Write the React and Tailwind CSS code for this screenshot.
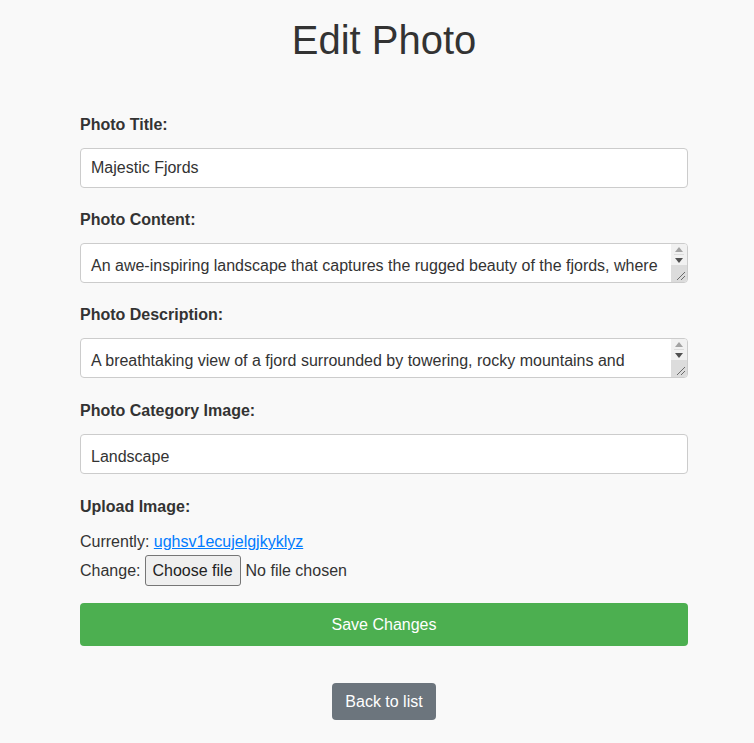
import { useState } from 'react';

const CONTENT =
  'An awe-inspiring landscape that captures the rugged beauty of the fjords, where steep cliffs plunge into deep blue waters and mist drifts over the peaks.';
const DESCRIPTION =
  'A breathtaking view of a fjord surrounded by towering, rocky mountains and verdant green valleys, with calm water reflecting the sky above.';

function Label({ children }) {
  return <label className="block text-[16px] leading-[18px] font-bold text-[#333] mb-[14px]">{children}</label>;
}

// classic scrollbar + resizer drawn over the textarea
function FakeScrollbar() {
  return (
    <div className="absolute top-[1px] right-[1px] bottom-[1px] w-[16px] flex flex-col rounded-r-[3px] overflow-hidden pointer-events-none">
      <div className="h-[10px] bg-[#f1f1f1] flex items-center justify-center">
        <svg width="8" height="5" viewBox="0 0 8 5">
          <path d="M0 5 L4 0 L8 5 Z" fill="#a3a3a3" />
        </svg>
      </div>
      <div className="h-[1px] bg-[#f1f1f1] flex justify-center">
        <div className="w-[10px] bg-[#dcdcdc]" />
      </div>
      <div className="h-[10px] bg-[#f1f1f1] flex items-center justify-center">
        <svg width="8" height="5" viewBox="0 0 8 5">
          <path d="M0 0 L4 5 L8 0 Z" fill="#505050" />
        </svg>
      </div>
      <div className="flex-1 bg-[#dcdcdc] relative">
        <svg className="absolute right-[1px] bottom-[1px]" width="11" height="11" viewBox="0 0 11 11">
          <path d="M10 2 L2 10 M10 6 L6 10" stroke="#6b6b6b" strokeWidth="1" />
        </svg>
      </div>
    </div>
  );
}

export default function App() {
  const [title, setTitle] = useState('Majestic Fjords');
  const [content, setContent] = useState(CONTENT);
  const [description, setDescription] = useState(DESCRIPTION);
  const [category, setCategory] = useState('Landscape');

  const field =
    'block w-full h-[40px] border border-[#ccc] rounded-[4px] bg-white px-[10px] text-[16px] text-[#333] outline-none';

  return (
    <div className="min-h-screen bg-[#f9f9f9] text-[#333]" style={{ fontFamily: '"Liberation Sans", Arial, sans-serif' }}>
      <div className="w-[608px] ml-[80px] pb-[20px]">
        <h1 className="text-center text-[40px] leading-[46px] font-normal text-[#333] pt-[17px] -mx-[80px]">Edit Photo</h1>

        <form className="mt-[53px]" onSubmit={(e) => e.preventDefault()}>
          <Label>Photo Title:</Label>
          <input className={`${field} mb-[23px]`} value={title} onChange={(e) => setTitle(e.target.value)} />

          <Label>Photo Content:</Label>
          <div className="relative mb-[23px]">
            <textarea
              rows={1}
              className={`${field} py-[10px] pr-[28px] leading-[24px] resize-none overflow-hidden`}
              value={content}
              onChange={(e) => setContent(e.target.value)}
            />
            <FakeScrollbar />
          </div>

          <Label>Photo Description:</Label>
          <div className="relative mb-[24px]">
            <textarea
              rows={1}
              className={`${field} py-[10px] pr-[28px] leading-[24px] resize-none overflow-hidden`}
              value={description}
              onChange={(e) => setDescription(e.target.value)}
            />
            <FakeScrollbar />
          </div>

          <Label>Photo Category Image:</Label>
          <textarea
            rows={1}
            className={`${field} py-[10px] leading-[24px] resize-none overflow-hidden mb-[24px]`}
            value={category}
            onChange={(e) => setCategory(e.target.value)}
          />

          <Label>Upload Image:</Label>
          <div className="mt-[17px] text-[16px] leading-[18px]">
            Currently:{' '}
            <a href="#" className="text-[#007bff] underline">
              ughsv1ecujelgjkyklyz
            </a>
          </div>
          <div className="mt-[4px] flex items-center text-[16px] leading-[18px]">
            <span className="mr-[4px]">Change:</span>
            <button
              type="button"
              className="h-[31px] px-[7px] border border-[#767676] rounded-[3px] bg-[#efefef] text-[#222] text-[16px]"
            >
              Choose file
            </button>
            <span className="ml-[5px]">No file chosen</span>
          </div>

          <button
            type="submit"
            className="mt-[17px] block w-full h-[43px] rounded-[4px] bg-[#4caf50] text-white text-[16px]"
          >
            Save Changes
          </button>
        </form>

        <div className="mt-[37px] flex justify-center">
          <a href="#" className="h-[37px] px-[13px] flex items-center rounded-[4px] bg-[#6c757d] text-white text-[16px]">
            Back to list
          </a>
        </div>
      </div>
    </div>
  );
}
